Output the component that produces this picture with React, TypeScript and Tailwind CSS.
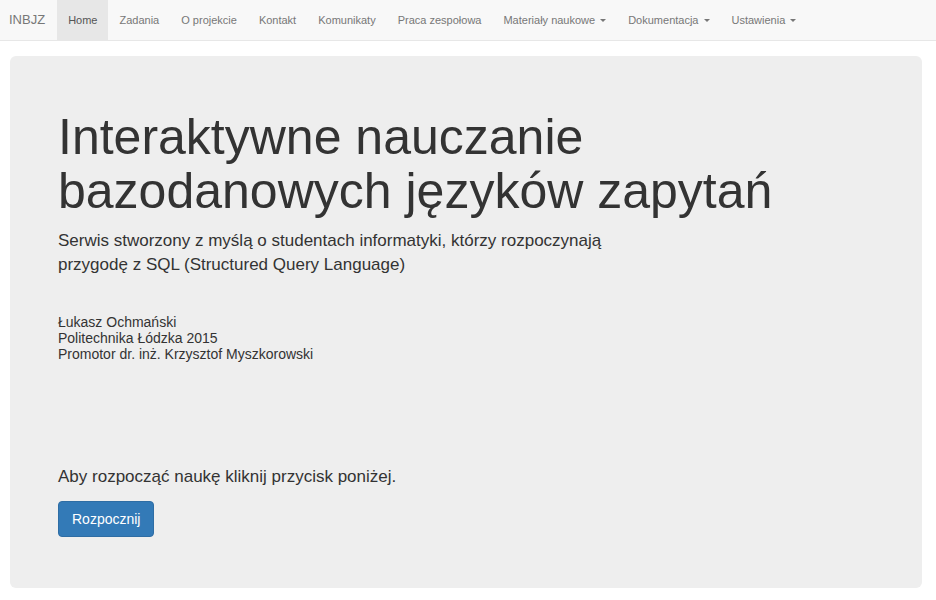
const navItems = [
  { label: "Home", active: true },
  { label: "Zadania" },
  { label: "O projekcie" },
  { label: "Kontakt" },
  { label: "Komunikaty" },
  { label: "Praca zespołowa" },
  { label: "Materiały naukowe", dropdown: true },
  { label: "Dokumentacja", dropdown: true },
  { label: "Ustawienia", dropdown: true },
];

function Caret() {
  return (
    <span className="ml-[5px] inline-block h-0 w-0 border-x-[3px] border-t-[3px] border-x-transparent border-t-[#777] align-middle" />
  );
}

export default function App() {
  return (
    <div className="min-h-[600px] bg-white font-['Liberation_Sans',Arial,sans-serif] text-[#333]">
      <nav className="flex h-[41px] items-stretch border-b border-[#e7e7e7] bg-[#f8f8f8]">
        <a className="flex items-center pl-[9px] pr-[12px] text-[13px] text-[#777]">INBJZ</a>
        <ul className="flex items-stretch">
          {navItems.map((item) => (
            <li
              key={item.label}
              className={`flex items-center px-[11px] text-[11px] ${
                item.active ? "bg-[#e7e7e7] text-[#555]" : "text-[#777]"
              }`}
            >
              {item.label}
              {item.dropdown && <Caret />}
            </li>
          ))}
        </ul>
      </nav>

      <div className="ml-[10px] mr-[14px] mt-[15px] rounded-[6px] bg-[#eee] pb-[51px] pl-[48px] pt-[54px]">
        <h1 className="text-[50px] leading-[54px] font-normal text-[#333]">
          Interaktywne nauczanie
          <br />
          bazodanowych języków zapytań
        </h1>
        <p className="mt-[11px] w-[570px] text-[17px] leading-[24px]">
          Serwis stworzony z myślą o studentach informatyki, którzy rozpoczynają przygodę z SQL
          (Structured Query Language)
        </p>
        <p className="mt-[37px] text-[14px] leading-[16px]">
          Łukasz Ochmański
          <br />
          Politechnika Łódzka 2015
          <br />
          Promotor dr. inż. Krzysztof Myszkorowski
        </p>
        <p className="mt-[103px] text-[17px] leading-[24px]">
          Aby rozpocząć naukę kliknij przycisk poniżej.
        </p>
        <button className="mt-[12px] h-[36px] rounded-[4px] border border-[#2e6da4] bg-[#337ab7] px-[13px] text-[14px] text-white">
          Rozpocznij
        </button>
      </div>
    </div>
  );
}
